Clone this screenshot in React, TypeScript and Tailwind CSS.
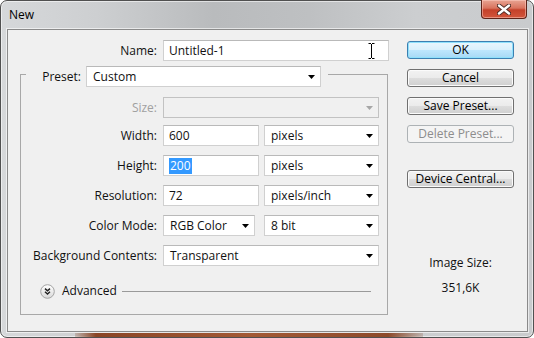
import React from 'react';

const font = "font-['Segoe_UI','Open_Sans',sans-serif]";

function Arrow({ disabled }: { disabled?: boolean }) {
  return (
    <svg width="7" height="4" viewBox="0 0 7 4" className="shrink-0">
      <path d="M0 0h7L3.5 4z" fill={disabled ? '#a6a6a6' : '#000'} />
    </svg>
  );
}

function Select({ value, className, disabled }: { value?: string; className: string; disabled?: boolean }) {
  return (
    <div
      className={`flex h-[21px] items-center justify-between border pl-[6px] pr-[5px] ${
        disabled ? 'border-[#c2c2c2] bg-[#f0f0f0]' : 'border-[#d0d0d0] border-t-[#b9b9b9] bg-white'
      } ${className}`}
    >
      <span>{value}</span>
      <Arrow disabled={disabled} />
    </div>
  );
}

function TextInput({ children, className }: { children: React.ReactNode; className: string }) {
  return (
    <div className={`relative flex h-[21px] items-center border border-[#d0d0d0] border-t-[#b9b9b9] bg-white pl-[5px] ${className}`}>
      {children}
    </div>
  );
}

function Row({ label, children, className = '' }: { label: string; children: React.ReactNode; className?: string }) {
  return (
    <div className={`flex items-center ${className}`}>
      <span className="w-[142px] pr-[6px] text-right">{label}</span>
      {children}
    </div>
  );
}

function Button({ children, variant = 'normal', className = '' }: { children: React.ReactNode; variant?: 'normal' | 'default' | 'disabled'; className?: string }) {
  const styles = {
    normal:
      'border-[#707070] text-black bg-[linear-gradient(#f2f2f2_0%,#ebebeb_50%,#dddddd_51%,#cfcfcf_100%)] shadow-[inset_0_0_0_1px_#fbfbfb]',
    default:
      'border-[#3c7fb1] text-black bg-[linear-gradient(#eaf6fd_0%,#d9f0fc_50%,#bee6fd_51%,#a7d9f5_100%)] shadow-[inset_0_0_0_1px_#8fe0fb]',
    disabled: 'border-[#adb2b5] text-[#8d8d8d] bg-[#f4f4f4]',
  }[variant];
  return (
    <div className={`flex h-[18px] w-[107px] items-center justify-center rounded-[3px] border ${styles} ${className}`}>
      {children}
    </div>
  );
}

function CloseButton() {
  return (
    <div className="-mt-px flex h-[19px] w-[46px] items-center justify-center rounded-b-[4px] border border-t-0 border-[#5e241a] bg-[linear-gradient(#e8a493_0%,#d9735e_45%,#c4412a_55%,#d2563c_100%)] shadow-[inset_0_0_0_1px_rgba(255,210,200,0.5)]">
      <svg width="14" height="11" viewBox="0 0 14 11">
        <path d="M2 1.5 12 9.5M12 1.5 2 9.5" stroke="#4a2a24" strokeWidth="4.2" strokeLinecap="round" />
        <path d="M2 1.5 12 9.5M12 1.5 2 9.5" stroke="#fff" strokeWidth="2.4" strokeLinecap="round" />
      </svg>
    </div>
  );
}

function AdvancedIcon() {
  return (
    <svg width="15" height="15" viewBox="0 0 15 15" className="shrink-0">
      <defs>
        <linearGradient id="adv" x1="0" y1="0" x2="0" y2="1">
          <stop offset="0" stopColor="#ffffff" />
          <stop offset="1" stopColor="#d9d9d9" />
        </linearGradient>
      </defs>
      <circle cx="7.5" cy="7.5" r="6.8" fill="url(#adv)" stroke="#a3a3a3" />
      <path d="M5 4.6 7.5 6.8 10 4.6M5 7.8 7.5 10 10 7.8" fill="none" stroke="#222" strokeWidth="1.4" />
    </svg>
  );
}

export default function App() {
  return (
    <div className={`${font} h-[338px] w-[534px] text-[12px] leading-[16px] text-[#111]`}>
      <div className="flex h-[338px] w-[534px] flex-col rounded-[7px] border border-[#505050] bg-[linear-gradient(90deg,#d6d8da_0%,#cdcfd1_18%,#b9bbbd_40%,#bec0c2_58%,#ccced0_78%,#c9cbcd_100%)] shadow-[inset_0_0_0_1px_rgba(255,255,255,0.55)]">
        {/* title bar */}
        <div className="flex h-[28px] items-start justify-between pl-[8px] pr-[6px]">
          <span className="pt-[6px] text-[#000]">New</span>
          <CloseButton />
        </div>

        {/* client area */}
        <div className="ml-[6px] flex h-[303px] w-[521px] border border-[#8a8a8a] bg-[#f0f0f0] shadow-[0_0_0_1px_rgba(255,255,255,0.6)]">
          {/* left column */}
          <div className="flex w-[381px] flex-col">
            <div className="mt-[10px] flex items-center">
              <span className="w-[155px] pr-[6px] text-right">Name:</span>
              <TextInput className="w-[226px]">
                <span>Untitled-1</span>
                <svg width="7" height="16" viewBox="0 0 7 16" className="absolute left-[204px] top-[2px]">
                  <path d="M0.5 0.5h2.5M4 0.5h2.5M3.5 1v14M0.5 15.5h2.5M4 15.5h2.5" stroke="#000" strokeWidth="1" fill="none" />
                </svg>
              </TextInput>
            </div>

            {/* Preset group */}
            <div className="ml-[12px] mt-[13px] flex h-[241px] w-[368px] flex-col border border-[#a8a8a8]">
              <div className="-mt-[9px] ml-[5px] flex w-[302px] items-center bg-[#f0f0f0]">
                <span className="w-[60px] pr-[5px] text-right">Preset:</span>
                <Select value="Custom" className="w-[235px]" />
              </div>

              <Row label="Size:" className="mt-[10px] text-[#a0a0a0]">
                <Select disabled className="h-[20px] w-[216px]" />
              </Row>
              <Row label="Width:" className="mt-[7px]">
                <TextInput className="w-[96px]">600</TextInput>
                <Select value="pixels" className="ml-[5px] w-[115px]" />
              </Row>
              <Row label="Height:" className="mt-[9px]">
                <TextInput className="w-[96px]">
                  <span className="bg-[#3399ff] px-px text-white">200</span>
                </TextInput>
                <Select value="pixels" className="ml-[5px] w-[115px]" />
              </Row>
              <Row label="Resolution:" className="mt-[9px]">
                <TextInput className="w-[96px]">72</TextInput>
                <Select value="pixels/inch" className="ml-[5px] w-[115px]" />
              </Row>
              <Row label="Color Mode:" className="mt-[9px]">
                <Select value="RGB Color" className="w-[92px]" />
                <Select value="8 bit" className="ml-[9px] w-[115px]" />
              </Row>
              <Row label="Background Contents:" className="mt-[9px]">
                <Select value="Transparent" className="w-[216px]" />
              </Row>

              <div className="ml-[19px] mt-[17px] flex items-center">
                <AdvancedIcon />
                <span className="ml-[7px]">Advanced</span>
                <div className="ml-[5px] h-px w-[249px] bg-[#9a9a9a]" />
              </div>
            </div>
          </div>

          {/* right column */}
          <div className="ml-[18px] flex w-[107px] flex-col items-center">
            <Button variant="default" className="mt-[11px]">OK</Button>
            <Button className="mt-[10px]">Cancel</Button>
            <Button className="mt-[10px]">Save Preset...</Button>
            <Button variant="disabled" className="mt-[10px]">Delete Preset...</Button>
            <Button className="mt-[27px]">Device Central...</Button>
            <span className="mt-[67px]">Image Size:</span>
            <span className="mt-[9px]">351,6K</span>
          </div>
        </div>

        {/* bottom frame with desktop showing through */}
        <div className="ml-[74px] mt-[1px] h-[4px] w-[348px] bg-[linear-gradient(90deg,rgba(120,60,30,0.2)_0%,#8a4526_6%,#a35a36_50%,#8d4a2b_90%,rgba(120,60,30,0.2)_100%)]" />
      </div>
    </div>
  );
}
